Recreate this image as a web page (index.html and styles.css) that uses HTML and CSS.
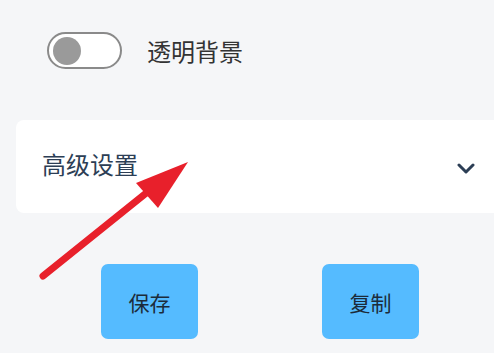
FILE: index.html
```html
<!DOCTYPE html>
<html lang="zh-CN">
<head>
    <meta charset="UTF-8">
    <meta name="viewport" content="width=device-width, initial-scale=1.0">
    <title>设置</title>
    <link rel="stylesheet" href="styles.css">
</head>
<body>

    <div class="option-row">
        <div class="switch">
            <span class="knob"></span>
        </div>
        <span class="option-label">透明背景</span>
    </div>

    <div class="panel">
        <span class="panel-title">高级设置</span>
        <svg class="chevron" width="18" height="12" viewBox="0 0 18 12">
            <path d="M2 2 L9 9 L16 2" fill="none" stroke="#2c3e55" stroke-width="3" stroke-linecap="round" stroke-linejoin="round"/>
        </svg>
    </div>

    <div class="actions">
        <button class="action-btn">保存</button>
        <button class="action-btn">复制</button>
    </div>

    <!-- annotation arrow -->
    <svg class="pointer" width="494" height="353" viewBox="0 0 494 353">
        <line x1="43" y1="276" x2="150" y2="190" stroke="#e8202b" stroke-width="7" stroke-linecap="round"/>
        <polygon points="188,162 136,183 158,208" fill="#e8202b"/>
    </svg>

</body>
</html>
```

FILE: styles.css
```css
body {
    margin: 0;
    padding: 0;
    background: #f5f6f8;
    font-family: "Noto Sans CJK SC", "Noto Sans", sans-serif;
    width: 494px;
    height: 353px;
    overflow: hidden;
    position: relative;
}

.option-row {
    display: flex;
    align-items: center;
    padding: 32px 0 0 47px;
    height: 37px;
}

.switch {
    width: 67px;
    height: 33px;
    border: 2px solid #8a8a8a;
    border-radius: 20px;
    background: #fff;
    display: flex;
    align-items: center;
    padding-left: 4px;
    box-sizing: content-box;
}

.knob {
    width: 28px;
    height: 28px;
    border-radius: 50%;
    background: #9a9a9a;
}

.option-label {
    margin-left: 25px;
    font-size: 24px;
    color: #333;
    line-height: 1;
}

.panel {
    margin: 51px 0 0 16px;
    width: 500px;
    height: 93px;
    background: #fff;
    border-radius: 8px;
    display: flex;
    align-items: center;
    box-sizing: border-box;
    padding-left: 26px;
}

.panel-title {
    font-size: 24px;
    color: #2c3e55;
    line-height: 1;
    margin-top: -5px;
}

.chevron {
    margin-left: auto;
    margin-right: 41px;
    margin-top: 5px;
}

.actions {
    display: flex;
    justify-content: space-between;
    padding: 51px 75px 0 101px;
}

.action-btn {
    width: 97px;
    height: 75px;
    border: none;
    border-radius: 7px;
    background: #55bbff;
    color: #1c2b3a;
    font-family: inherit;
    font-size: 21px;
}

.pointer {
    position: absolute;
    left: 0;
    top: 0;
    pointer-events: none;
}
```
